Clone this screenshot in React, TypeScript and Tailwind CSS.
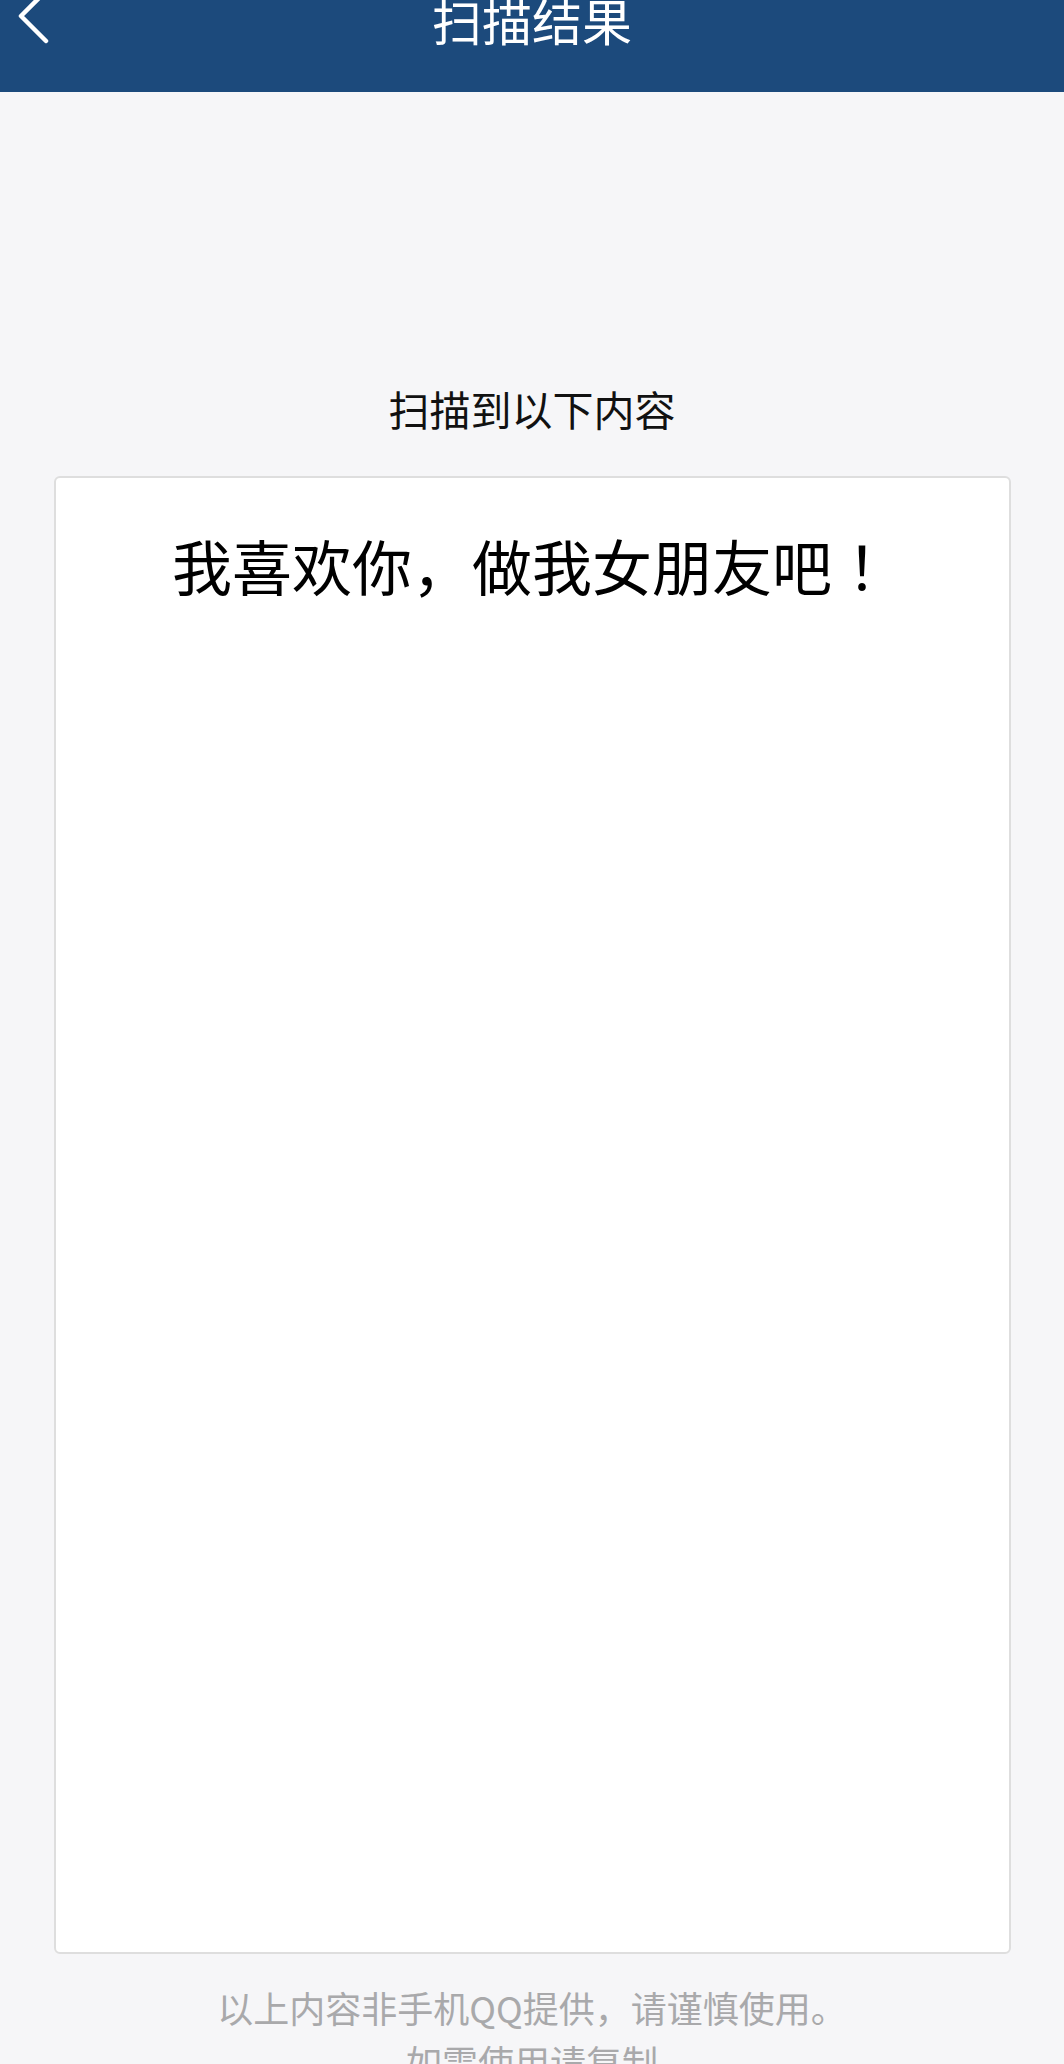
export default function App() {
  return (
    <div className="min-h-screen bg-[#f6f6f8] font-['Noto_Sans_CJK_SC','Noto_Sans',sans-serif]">
      {/* Header */}
      <header className="grid h-[92px] grid-cols-[1fr_auto_1fr] overflow-hidden bg-[#1c4a7c]">
        <div className="flex items-start">
          <svg width="60" height="60" viewBox="0 0 60 60" className="shrink-0">
            <path
              d="M44 -7 L21 16 L46 41"
              fill="none"
              stroke="#ffffff"
              strokeWidth="4.5"
              strokeLinecap="round"
              strokeLinejoin="round"
            />
          </svg>
        </div>
        <h1 className="mt-[-6px] text-[50px] leading-[50px] font-normal text-white">扫描结果</h1>
        <div />
      </header>

      {/* Content */}
      <main className="flex flex-col items-center">
        <p className="mt-[295px] text-[41px] leading-[42px] text-[#111111]">扫描到以下内容</p>

        <div className="mt-[47px] h-[1478px] w-[957px] rounded-[6px] border-2 border-[#dedede] bg-white pt-[57px]">
          <p className="text-center text-[60px] leading-[60px] text-black">
            我喜欢你，做我女朋友吧
            <span className="font-['Noto_Sans_CJK_JP',sans-serif]">！</span>
          </p>
        </div>

        <div className="mt-[26px] text-center text-[36px] leading-[54px] text-[#a9a9ab]">
          <p>以上内容非手机QQ提供，请谨慎使用。</p>
          <p>如需使用请复制</p>
        </div>
      </main>
    </div>
  );
}
